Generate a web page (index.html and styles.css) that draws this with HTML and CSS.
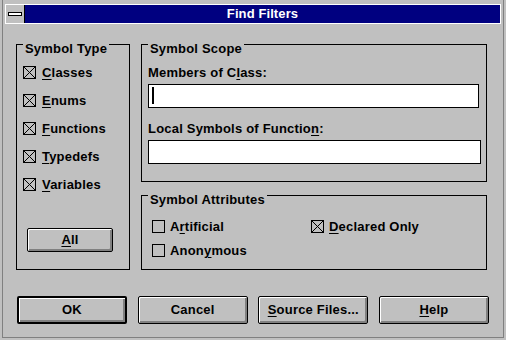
FILE: index.html
```html
<!DOCTYPE html>
<html>
<head>
<meta charset="utf-8">
<title>Find Filters</title>
<link rel="stylesheet" href="styles.css">
</head>
<body>
<div class="window">
  <div class="titlebar">
    <div class="sysmenu"><span class="sysbar"></span></div>
    <div class="caption">Find Filters</div>
  </div>
  <div class="client">
    <div class="panes">
      <div class="group">
        <div class="group-title">Symbol Type</div>
        <div class="group-body type-body">
          <div class="check-row type-row">
            <svg class="check" width="13" height="13" viewBox="0 0 13 13" shape-rendering="crispEdges"><rect x="0.5" y="0.5" width="12" height="12" fill="none" stroke="#000"/><path d="M1 1L12 12M12 1L1 12" stroke="#000" fill="none"/></svg>
            <span class="check-label"><u>C</u>lasses</span>
          </div>
          <div class="check-row type-row">
            <svg class="check" width="13" height="13" viewBox="0 0 13 13" shape-rendering="crispEdges"><rect x="0.5" y="0.5" width="12" height="12" fill="none" stroke="#000"/><path d="M1 1L12 12M12 1L1 12" stroke="#000" fill="none"/></svg>
            <span class="check-label"><u>E</u>nums</span>
          </div>
          <div class="check-row type-row">
            <svg class="check" width="13" height="13" viewBox="0 0 13 13" shape-rendering="crispEdges"><rect x="0.5" y="0.5" width="12" height="12" fill="none" stroke="#000"/><path d="M1 1L12 12M12 1L1 12" stroke="#000" fill="none"/></svg>
            <span class="check-label"><u>F</u>unctions</span>
          </div>
          <div class="check-row type-row">
            <svg class="check" width="13" height="13" viewBox="0 0 13 13" shape-rendering="crispEdges"><rect x="0.5" y="0.5" width="12" height="12" fill="none" stroke="#000"/><path d="M1 1L12 12M12 1L1 12" stroke="#000" fill="none"/></svg>
            <span class="check-label"><u>T</u>ypedefs</span>
          </div>
          <div class="check-row type-row">
            <svg class="check" width="13" height="13" viewBox="0 0 13 13" shape-rendering="crispEdges"><rect x="0.5" y="0.5" width="12" height="12" fill="none" stroke="#000"/><path d="M1 1L12 12M12 1L1 12" stroke="#000" fill="none"/></svg>
            <span class="check-label"><u>V</u>ariables</span>
          </div>
          <button class="btn all-btn"><span><u>A</u>ll</span></button>
        </div>
      </div>
      <div class="right-col">
        <div class="group">
          <div class="group-title">Symbol Scope</div>
          <div class="group-body scope-body">
            <div class="field-label first">Members of C<u>l</u>ass:</div>
            <div class="field field-class"><span class="caret"></span></div>
            <div class="field-label">Local Symbols of Functio<u>n</u>:</div>
            <div class="field field-func"></div>
          </div>
        </div>
        <div class="group">
          <div class="group-title">Symbol Attributes</div>
          <div class="group-body attr-body">
            <div class="check-row attr-row">
              <svg class="check" width="13" height="13" viewBox="0 0 13 13" shape-rendering="crispEdges"><rect x="0.5" y="0.5" width="12" height="12" fill="none" stroke="#000"/></svg>
              <span class="check-label">A<u>r</u>tificial</span>
            </div>
            <div class="check-row attr-row">
              <svg class="check" width="13" height="13" viewBox="0 0 13 13" shape-rendering="crispEdges"><rect x="0.5" y="0.5" width="12" height="12" fill="none" stroke="#000"/><path d="M1 1L12 12M12 1L1 12" stroke="#000" fill="none"/></svg>
              <span class="check-label"><u>D</u>eclared Only</span>
            </div>
            <div class="check-row attr-row">
              <svg class="check" width="13" height="13" viewBox="0 0 13 13" shape-rendering="crispEdges"><rect x="0.5" y="0.5" width="12" height="12" fill="none" stroke="#000"/></svg>
              <span class="check-label">Anon<u>y</u>mous</span>
            </div>
          </div>
        </div>
      </div>
    </div>
    <div class="buttons">
      <button class="btn push default">OK</button>
      <button class="btn push">Cancel</button>
      <button class="btn push"><span><u>S</u>ource Files...</span></button>
      <button class="btn push"><span><u>H</u>elp</span></button>
    </div>
  </div>
</div>
</body>
</html>
```
FILE: styles.css
```css
html, body {
  margin: 0;
  padding: 0;
}

body {
  width: 506px;
  height: 340px;
  overflow: hidden;
  background: #c0c0c0;
  color: #000;
  font-family: "Liberation Sans", Arial, sans-serif;
  font-weight: bold;
  font-size: 13px;
  line-height: 16px;
  letter-spacing: 0.2px;
}

u {
  text-decoration-thickness: 1px;
  text-underline-offset: 2px;
}

.window {
  box-sizing: border-box;
  width: 502px;
  height: 338px;
  margin: 0 2px;
  border: solid #808080;
  border-width: 0 1px 1px 1px;
  padding: 4px 2px 0 2px;
}

/* Title bar */
.titlebar {
  display: flex;
  height: 18px;
  border: 1px solid #fff;
}

.sysmenu {
  width: 18px;
  height: 18px;
  border-right: 1px solid #000;
  display: flex;
  align-items: center;
  justify-content: center;
}

.sysbar {
  box-sizing: border-box;
  width: 14px;
  height: 4px;
  border: 1px solid #000;
  background: #fff;
}

.caption {
  flex: 1;
  background: #000080;
  color: #fff;
  text-align: center;
  line-height: 18px;
  letter-spacing: 0.1px;
}

/* Client */
.client {
  padding: 20px 0 0 11px;
}

.panes {
  display: grid;
  grid-template-columns: 114px 346px;
  column-gap: 11px;
}

.right-col {
  display: flex;
  flex-direction: column;
  gap: 13px;
}

.group {
  border: 1px solid #000;
}

.group-title {
  width: fit-content;
  margin: -4px 0 0 6px;
  padding: 0 2px;
  background: #c0c0c0;
  line-height: 16px;
}

/* Symbol type */
.type-body {
  padding: 2px 0 17px 6px;
}

.check-row {
  display: flex;
  align-items: flex-start;
}

.check {
  display: block;
  flex: none;
}

.type-row {
  height: 28px;
  gap: 6px;
}

.type-row .check {
  margin-top: 7px;
}

.type-row .check-label {
  margin-top: 6px;
}

.all-btn {
  width: 86px;
  height: 24px;
  margin: 29px 0 0 4px;
}

/* Scope */
.scope-body {
  padding: 0 0 17px 6px;
}

.field-label {
  margin-top: 13px;
}

.field-label.first {
  margin-top: 8px;
}

.field {
  box-sizing: border-box;
  height: 24px;
  margin-top: 3px;
  border: 1px solid #000;
  background: #fff;
}

.field-class {
  width: 331px;
  padding: 2px 0 0 3px;
}

.field-func {
  width: 333px;
}

.caret {
  display: block;
  width: 2px;
  height: 17px;
  background: #000;
}

/* Attributes */
.attr-body {
  display: grid;
  grid-template-columns: 159px auto;
  grid-auto-rows: 24px;
  padding: 6px 0 7px 10px;
}

.attr-row {
  gap: 5px;
}

.attr-row .check {
  margin-top: 6px;
}

.attr-row .check-label {
  margin-top: 5px;
}

/* Buttons */
.btn {
  box-sizing: border-box;
  appearance: none;
  display: flex;
  align-items: center;
  justify-content: center;
  padding: 0;
  font: inherit;
  letter-spacing: inherit;
  color: #000;
  background: #c0c0c0;
  border: 1px solid #000;
  border-radius: 2px;
  box-shadow: inset 1px 1px #fff, inset -2px -2px #808080;
}

.buttons {
  display: flex;
  justify-content: space-between;
  width: 472px;
  margin: 26px 0 0 1px;
}

.push {
  width: 110px;
  height: 28px;
}

.push.default {
  border-width: 2px;
}
```
